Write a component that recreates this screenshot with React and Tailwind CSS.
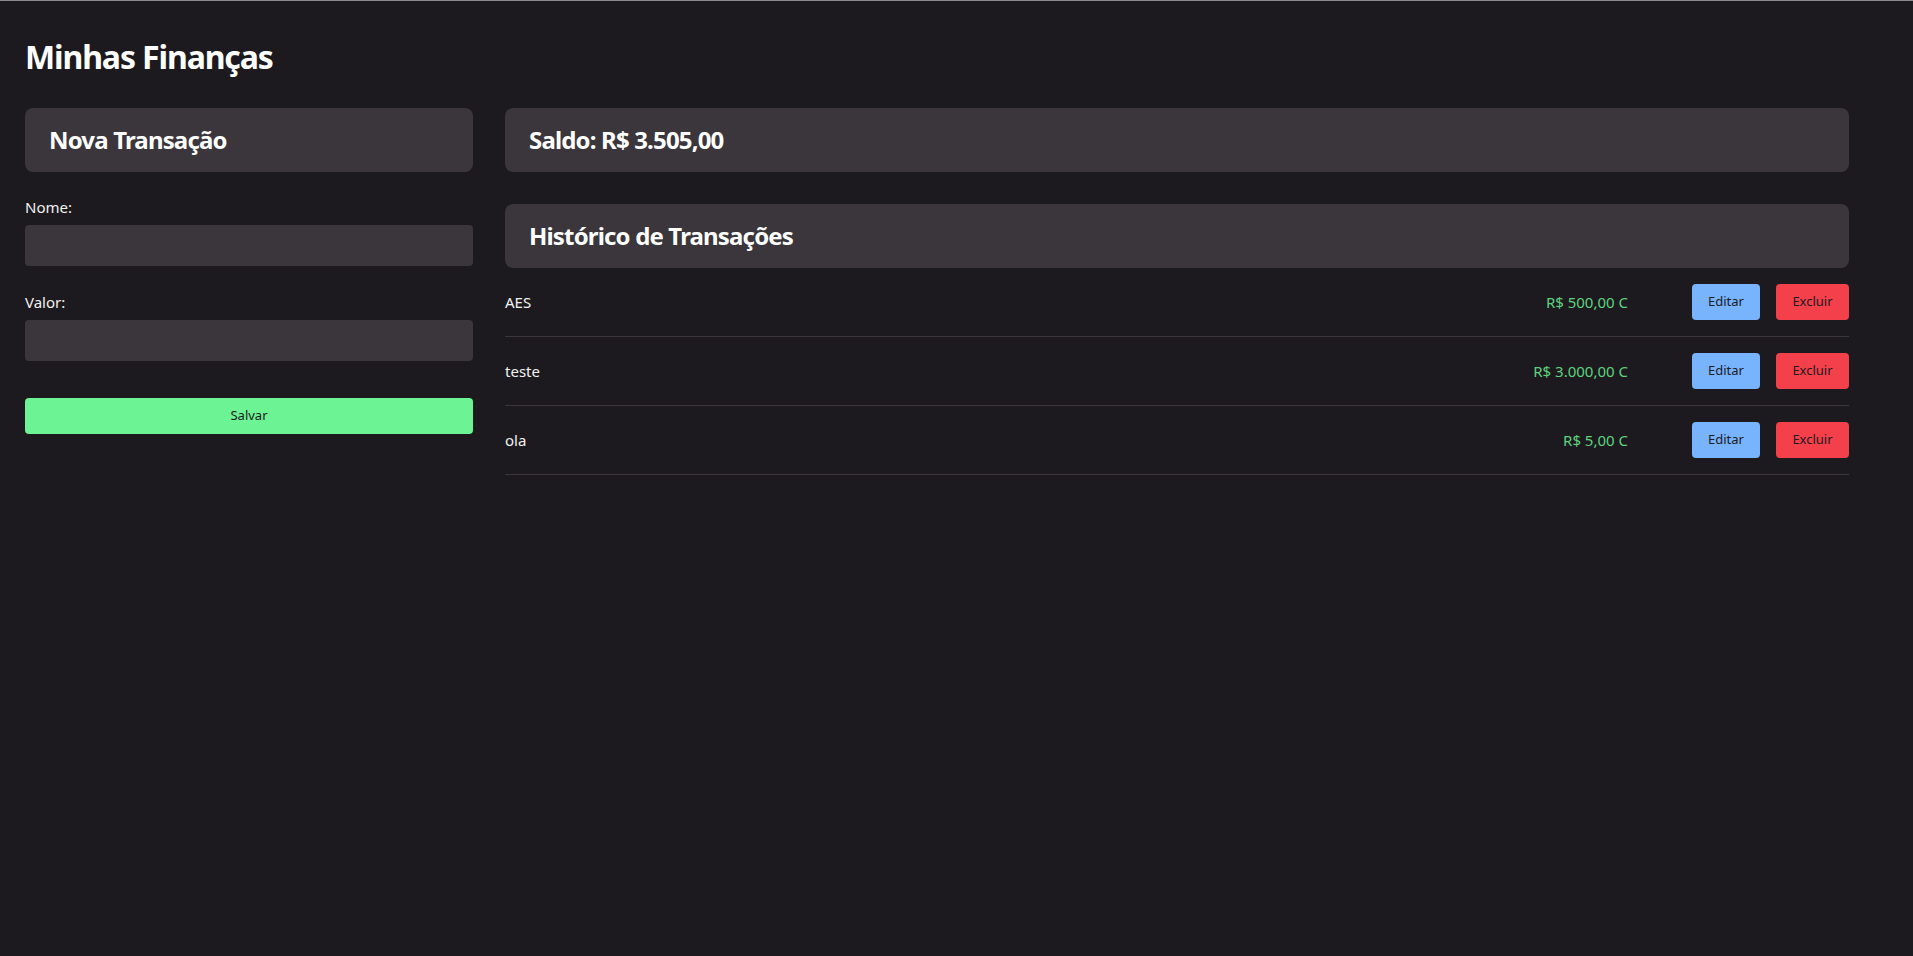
const transactions = [
  { id: 1, name: 'AES', amount: 'R$ 500,00 C' },
  { id: 2, name: 'teste', amount: 'R$ 3.000,00 C' },
  { id: 3, name: 'ola', amount: 'R$ 5,00 C' },
];

function PanelTitle({ children }) {
  return (
    <div className="h-[64px] flex items-center px-6 rounded-lg bg-[#3a363c]">
      <h2 className="text-[24px] font-bold text-white leading-none tracking-[-0.035em]">{children}</h2>
    </div>
  );
}

export default function App() {
  return (
    <div
      className="min-h-screen bg-[#1c1a1e] text-[#f2f2f2] border-t border-[#8a8a8a]"
      style={{ fontFamily: '"Noto Sans", "Open Sans", sans-serif' }}
    >
      <div className="pl-[25px] pr-[64px] pt-[36px]">
        <h1 className="text-[32px] font-bold text-white leading-[40px] tracking-[-0.035em]">Minhas Finanças</h1>

        <div className="mt-[31px] grid grid-cols-[1fr_3fr] gap-8 items-start">
          {/* Nova transação */}
          <div>
            <PanelTitle>Nova Transação</PanelTitle>
            <form className="mt-[25px]" onSubmit={(e) => e.preventDefault()}>
              <label className="block text-[15px] leading-[20px]">Nome:</label>
              <input className="mt-[8px] block w-full h-[41px] rounded bg-[#3a363c] outline-none px-3 text-white" />
              <label className="block mt-[26px] text-[15px] leading-[20px]">Valor:</label>
              <input className="mt-[8px] block w-full h-[41px] rounded bg-[#3a363c] outline-none px-3 text-white" />
              <button className="mt-[37px] w-full h-[36px] rounded bg-[#6cf394] text-[#1c1a1e] text-[13px]">
                Salvar
              </button>
            </form>
          </div>

          {/* Saldo e histórico */}
          <div>
            <PanelTitle>Saldo: R$ 3.505,00</PanelTitle>
            <div className="mt-8">
              <PanelTitle>Histórico de Transações</PanelTitle>
            </div>
            <ul>
              {transactions.map((t) => (
                <li
                  key={t.id}
                  className="h-[69px] flex items-center border-b border-[#3a363c]"
                >
                  <span className="flex-1 text-[15px]">{t.name}</span>
                  <span className="text-[15px] text-[#5fd27f] mr-16">{t.amount}</span>
                  <div className="flex gap-4">
                    <button className="w-[68px] h-[36px] rounded bg-[#78b4fe] text-[#1c1a1e] text-[13px]">
                      Editar
                    </button>
                    <button className="w-[73px] h-[36px] rounded bg-[#f4404a] text-[#1c1a1e] text-[13px]">
                      Excluir
                    </button>
                  </div>
                </li>
              ))}
            </ul>
          </div>
        </div>
      </div>
    </div>
  );
}
